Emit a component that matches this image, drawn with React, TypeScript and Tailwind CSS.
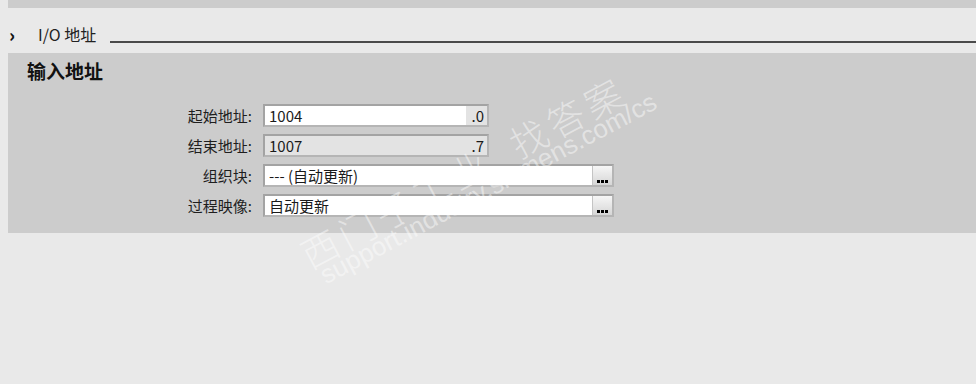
import React from "react";

const font = { fontFamily: '"Noto Sans CJK SC", "Noto Sans", sans-serif' };

function Field({
  value,
  width,
  suffix,
  gray,
  button,
}: {
  value: string;
  width: number;
  suffix?: string;
  gray?: boolean;
  button?: boolean;
}) {
  return (
    <div
      className={`flex h-[23px] border-2 border-t-[#a3a3a3] border-l-[#a3a3a3] border-b-[#b5b5b5] border-r-[#b5b5b5] ${
        gray ? "bg-[#e3e3e3]" : "bg-white"
      }`}
      style={{ width }}
    >
      <div className="flex-1 flex items-center pl-[4px] text-[15px] leading-none text-[#1a1a1a]">
        {value}
      </div>
      {suffix !== undefined && (
        <div
          className={`w-[21px] flex items-center justify-end pr-[3px] text-[15px] leading-none text-[#1a1a1a] ${
            gray ? "" : "bg-[#e3e3e3]"
          }`}
        >
          {suffix}
        </div>
      )}
      {button && (
        <div className="w-[20px] h-full bg-gradient-to-b from-[#f6f6f6] to-[#d6d6d6] border-l border-[#c4c4c4] flex items-end justify-center pb-[2px] gap-[1px]">
          <span className="w-[3px] h-[3px] bg-black" />
          <span className="w-[3px] h-[3px] bg-black" />
          <span className="w-[3px] h-[3px] bg-black" />
        </div>
      )}
    </div>
  );
}

export default function App() {
  const rows: { label: string; field: React.ReactNode }[] = [
    { label: "起始地址:", field: <Field value="1004" width={226} suffix=".0" /> },
    { label: "结束地址:", field: <Field value="1007" width={226} suffix=".7" gray /> },
    { label: "组织块:", field: <Field value="--- (自动更新)" width={351} button /> },
    { label: "过程映像:", field: <Field value="自动更新" width={351} button /> },
  ];
  return (
    <div className="relative w-[976px] h-[384px] overflow-hidden bg-[#e9e9e9]" style={font}>
      <div className="ml-[8px] h-[8px] bg-[#cccccc]" />
      <div className="h-[45px] flex items-center pt-[6px]">
        <span className="w-[38px] pl-[9px] text-[18px] font-black text-[#111] leading-none">›</span>
        <span className="text-[16px] text-[#222] leading-none w-[72px]">I/O 地址</span>
        <div className="flex-1 h-[2px] mt-[16px] bg-[#4a4a4a]" />
      </div>
      <div className="ml-[8px] h-[180px] bg-[#cccccc]">
        <div className="pl-[19px] pt-[5px] text-[19px] font-bold text-[#111] leading-[25px]">输入地址</div>
        <div className="mt-[21px] flex flex-col gap-[7px]">
          {rows.map((r) => (
            <div key={r.label} className="flex items-center">
              <div className="w-[244px] text-right text-[15px] text-[#1e1e1e] leading-none">
                {r.label}
              </div>
              <div className="ml-[11px]">{r.field}</div>
            </div>
          ))}
        </div>
      </div>
      <div className="pointer-events-none absolute left-0 top-0 w-full h-full">
        <div
          className="absolute left-[312px] top-[236px] origin-bottom-left text-[37px] tracking-[5px] text-white/45 whitespace-nowrap leading-none font-light"
          style={{ transform: "rotate(-28deg)" }}
        >
          西门子工业&nbsp;&nbsp;找答案
        </div>
        <div
          className="absolute left-[328px] top-[262px] origin-bottom-left text-[26px] text-white/45 whitespace-nowrap leading-none"
          style={{ transform: "rotate(-28deg)", fontFamily: '"Liberation Sans", sans-serif' }}
        >
          support.industry.siemens.com/cs
        </div>
      </div>
    </div>
  );
}
